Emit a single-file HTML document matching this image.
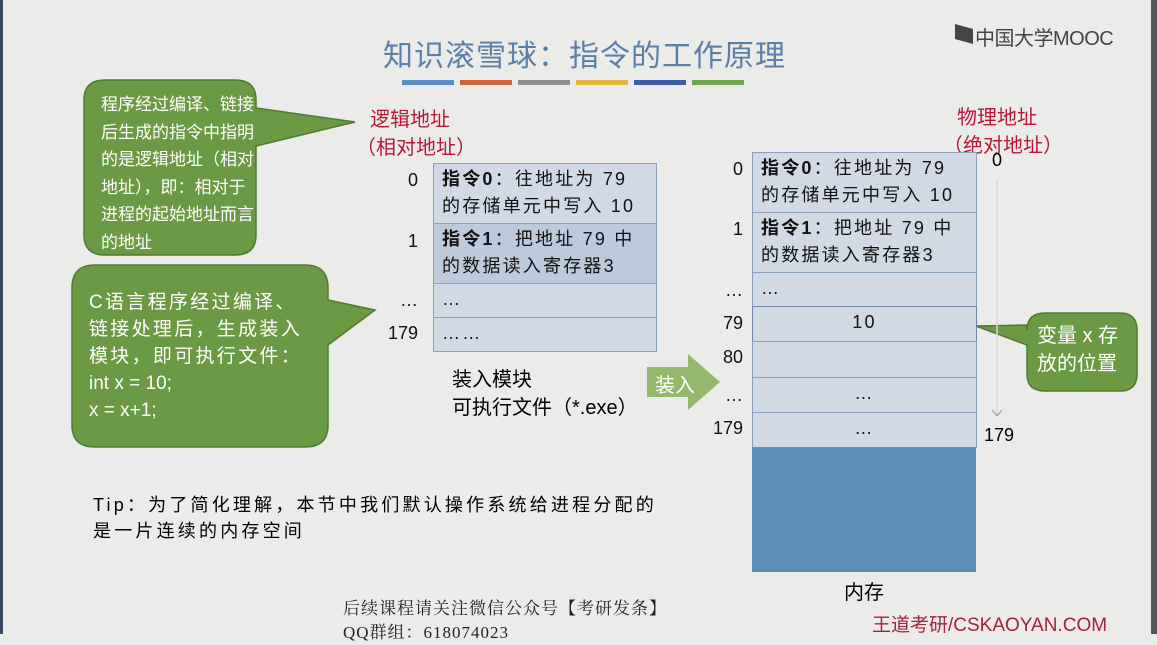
<!DOCTYPE html>
<html><head><meta charset="utf-8"><style>
body{margin:0;width:1157px;height:634px;overflow:hidden;background:#ebecea;font-family:"Liberation Sans","Noto Sans CJK SC",sans-serif;position:relative}
.a{position:absolute;white-space:nowrap}
.cell{position:absolute;box-sizing:border-box;border:1px solid #8aa0bd;background:#d0d9e4;font-size:18px;letter-spacing:2.2px;color:#111;padding:2px 0 0 8px;line-height:27px}
.lab{position:absolute;font-size:18px;color:#111;text-align:right;width:40px}
.red{color:#b8173a;font-size:20px}
</style></head><body>
<div class="a" style="left:0;top:0;width:3px;height:634px;background:#3a4a66"></div>
<div class="a" style="left:1151px;top:0;width:6px;height:634px;background:#555"></div>
<div class="a" style="left:383px;top:31px;font-size:30px;color:#5a80a8;letter-spacing:1px">知识滚雪球：指令的工作原理</div>
<div class="a" style="left:402px;top:80px;width:52px;height:5px;background:#5b8ec4"></div>
<div class="a" style="left:460px;top:80px;width:52px;height:5px;background:#cf6437"></div>
<div class="a" style="left:518px;top:80px;width:52px;height:5px;background:#8e8e8e"></div>
<div class="a" style="left:576px;top:80px;width:52px;height:5px;background:#e5b33e"></div>
<div class="a" style="left:634px;top:80px;width:52px;height:5px;background:#3d5ea6"></div>
<div class="a" style="left:692px;top:80px;width:52px;height:5px;background:#6da74a"></div>
<div class="a" style="left:955px;top:24px;width:18px;height:20px;background:#444;clip-path:polygon(0 0,100% 25%,100% 100%,0 75%)"></div>
<div class="a" style="left:975px;top:22px;font-size:20px;color:#444;letter-spacing:-0.5px">中国大学MOOC</div>
<svg class="a" style="left:0;top:0" width="1157" height="634">
<path d="M105 80 H235 Q256 80 256 100 V108 L355 122 L256 146 V235 Q256 255 235 255 H105 Q84 255 84 235 V100 Q84 80 105 80Z" fill="#6c9a44" stroke="#4f7a32" stroke-width="1.5"/>
<path d="M95 265 H305 Q328 265 328 288 V300 L375 310 L328 345 V425 Q328 447 305 447 H95 Q72 447 72 425 V288 Q72 265 95 265Z" fill="#6c9a44" stroke="#4f7a32" stroke-width="1.5"/>
<path d="M1045 313 H1120 Q1137 313 1137 330 V374 Q1137 391 1120 391 H1045 Q1027 391 1027 374 V345 L976 326 L1027 325 V330 Q1027 313 1045 313Z" fill="#6c9a44" stroke="#4f7a32" stroke-width="1.5"/>
<path d="M647 367 H688 V354 L720 382 L688 410 V397 H647Z" fill="#93b96c"/>
<line x1="997" y1="180" x2="997" y2="415" stroke="#d4d8dc" stroke-width="1.5"/>
<path d="M992 410 L997 416 L1002 410" fill="none" stroke="#999" stroke-width="1"/>
</svg>
<div class="a" style="left:101px;top:91px;font-size:17px;line-height:27.5px;color:#fff">程序经过编译、链接<br>后生成的指令中指明<br>的是逻辑地址（相对<br>地址），即：相对于<br>进程的起始地址而言<br>的地址</div>
<div class="a" style="left:89px;top:289px;font-size:19px;line-height:27px;color:#fff;letter-spacing:2.3px">C语言程序经过编译、<br>链接处理后，生成装入<br>模块，即可执行文件：<br><span style="letter-spacing:0">int x = 10;<br>x = x+1;</span></div>
<div class="a" style="left:1037px;top:322px;font-size:20px;line-height:28px;color:#fff">变量 x 存<br>放的位置</div>
<div class="a" style="left:655px;top:369px;font-size:20px;color:#fff">装入</div>
<div class="a red" style="left:370px;top:103px">逻辑地址</div>
<div class="a red" style="left:356px;top:131px">（相对地址）</div>
<div class="a red" style="left:957px;top:101px">物理地址</div>
<div class="a red" style="left:943px;top:129px">（绝对地址）</div>
<div class="cell" style="left:433px;top:163px;width:224px;height:61px;background:#d0d9e5"><b>指令0</b>：往地址为 79<br>的存储单元中写入 10</div>
<div class="cell" style="left:433px;top:223px;width:224px;height:61px;background:#bccadb"><b>指令1</b>：把地址 79 中<br>的数据读入寄存器3</div>
<div class="cell" style="left:433px;top:283px;width:224px;height:35px">…</div>
<div class="cell" style="left:433px;top:317px;width:224px;height:35px">……</div>
<div class="lab" style="left:378px;top:170px">0</div>
<div class="lab" style="left:378px;top:231px">1</div>
<div class="lab" style="left:378px;top:290px">…</div>
<div class="lab" style="left:378px;top:323px">179</div>
<div class="a" style="left:452px;top:366px;font-size:20px;line-height:28px">装入模块<br>可执行文件（*.exe）</div>
<div class="cell" style="left:752px;top:152px;width:225px;height:61px"><b>指令0</b>：往地址为 79<br>的存储单元中写入 10</div>
<div class="cell" style="left:752px;top:212px;width:225px;height:61px"><b>指令1</b>：把地址 79 中<br>的数据读入寄存器3</div>
<div class="cell" style="left:752px;top:272px;width:225px;height:35px">…</div>
<div class="cell" style="left:752px;top:306px;width:225px;height:36px;border-color:#6f86a8;text-align:center;padding-left:0">10</div>
<div class="cell" style="left:752px;top:341px;width:225px;height:37px"></div>
<div class="cell" style="left:752px;top:377px;width:225px;height:36px;text-align:center;padding-left:0">…</div>
<div class="cell" style="left:752px;top:412px;width:225px;height:36px;text-align:center;padding-left:0">…</div>
<div class="a" style="left:752px;top:447px;width:224px;height:125px;background:#5d8db9"></div>
<div class="lab" style="left:703px;top:159px">0</div>
<div class="lab" style="left:703px;top:219px">1</div>
<div class="lab" style="left:703px;top:280px">…</div>
<div class="lab" style="left:703px;top:313px">79</div>
<div class="lab" style="left:703px;top:347px">80</div>
<div class="lab" style="left:703px;top:385px">…</div>
<div class="lab" style="left:703px;top:418px">179</div>
<div class="a" style="left:992px;top:150px;font-size:18px">0</div>
<div class="a" style="left:984px;top:425px;font-size:18px">179</div>
<div class="a" style="left:844px;top:576px;font-size:20px">内存</div>
<div class="a" style="left:93px;top:492px;font-size:18px;line-height:26px;letter-spacing:3.2px">Tip：为了简化理解，本节中我们默认操作系统给进程分配的<br>是一片连续的内存空间</div>
<div class="a" style="left:343px;top:597px;font-size:17px;letter-spacing:1px;font-family:'Liberation Serif','Noto Serif CJK SC',serif;line-height:24px;color:#222">后续课程请关注微信公众号【考研发条】<br>QQ群组：618074023</div>
<div class="a" style="left:872px;top:610px;font-size:19px;color:#a3213b">王道考研/CSKAOYAN.COM</div>
</body></html>
